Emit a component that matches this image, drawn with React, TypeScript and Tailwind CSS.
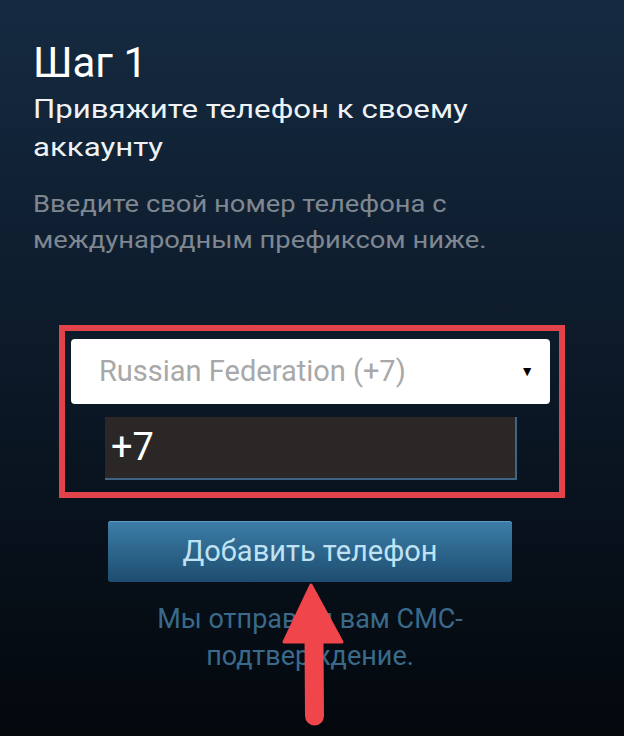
export default function App() {
  return (
    <div
      className="relative flex h-[736px] w-[624px] flex-col overflow-hidden bg-gradient-to-b from-[#152a41] via-[#0c1928] to-[#04080d]"
      style={{ fontFamily: "Roboto, 'Liberation Sans', sans-serif" }}
    >
      {/* Header text */}
      <div className="flex flex-col px-[33px] pt-[38px]">
        <h1 className="text-[42px] leading-[50px] text-white">Шаг 1</h1>
        <h2 className="mt-[2px] w-[370px] origin-left scale-x-[1.2] text-[26px] leading-[38px] text-[#eef2f5]">
          Привяжите телефон к своему аккаунту
        </h2>
        <p className="mt-[20px] w-[420px] origin-left scale-x-[1.14] text-[24px] leading-[36px] text-[#7f8790]">
          Введите свой номер телефона с международным префиксом ниже.
        </p>
      </div>

      {/* Highlighted form */}
      <div className="ml-[59px] mt-[67px] flex w-[506px] flex-col border-[6px] border-[#e2434b] pb-[12px] pt-[8px]">
        <div className="ml-[6px] flex h-[65px] w-[479px] items-center justify-between rounded-[4px] bg-white pl-[28px] pr-[16px]">
          <span className="text-[29px] text-[#a8a8a8]">Russian Federation (+7)</span>
          <span className="text-[14px] text-black">▼</span>
        </div>
        <div className="ml-[40px] mt-[13px] flex h-[63px] w-[412px] items-center border-b-2 border-r-2 border-[#3e6683] bg-[#2a2726] pl-[6px]">
          <span className="text-[38px] text-white">+7</span>
        </div>
      </div>

      {/* Button */}
      <button className="ml-[108px] mt-[23px] flex h-[61px] w-[404px] items-center justify-center rounded-[3px] bg-gradient-to-b from-[#3c7ea8] to-[#1e4d70] shadow-[inset_0_1px_0_#5a9cc4]">
        <span className="text-[29px] text-[#bfe2f4]">Добавить телефон</span>
      </button>

      <div className="ml-[108px] mt-[19px] w-[404px] px-[40px] text-center text-[27px] leading-[37px] text-[#3a6a8a]">
        Мы отправим вам СМС-подтверждение.
      </div>

      {/* Red arrow annotation */}
      <svg
        className="absolute left-[280px] top-[580px]"
        width="66"
        height="150"
        viewBox="0 0 66 150"
      >
        <path d="M31 5 L62 62 L4 62 Z" fill="#ef454b" stroke="#ef454b" strokeWidth="3" strokeLinejoin="round" />
        <line x1="34" y1="58" x2="34.5" y2="136" stroke="#ef454b" strokeWidth="19" strokeLinecap="round" />
      </svg>
    </div>
  );
}
